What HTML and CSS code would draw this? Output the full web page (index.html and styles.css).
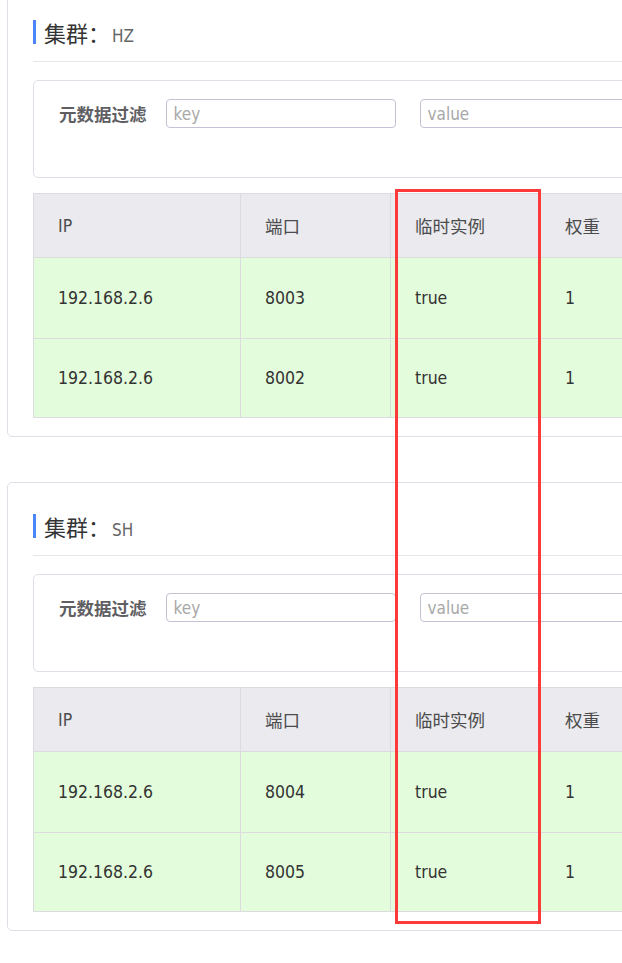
FILE: index.html
```html
<!DOCTYPE html>
<html lang="zh-CN">
<head>
  <meta charset="UTF-8">
  <meta name="viewport" content="width=device-width, initial-scale=1.0">
  <title>集群实例</title>
  <link rel="stylesheet" href="styles.css">
</head>
<body>
  <div class="page">

    <!-- Cluster HZ -->
    <div class="cluster-card">
      <div class="cluster-header">
        <span class="cluster-title">集群：<span class="cluster-name">HZ</span></span>
      </div>
      <div class="filter-box">
        <label class="filter-label">元数据过滤</label>
        <input type="text" class="filter-input" placeholder="key">
        <input type="text" class="filter-input filter-input--value" placeholder="value">
      </div>
      <table class="instance-table">
        <thead>
          <tr>
            <th class="col-ip">IP</th>
            <th class="col-port">端口</th>
            <th class="col-eph">临时实例</th>
            <th class="col-weight">权重</th>
          </tr>
        </thead>
        <tbody>
          <tr>
            <td>192.168.2.6</td>
            <td>8003</td>
            <td>true</td>
            <td>1</td>
          </tr>
          <tr>
            <td>192.168.2.6</td>
            <td>8002</td>
            <td>true</td>
            <td>1</td>
          </tr>
        </tbody>
      </table>
    </div>

    <!-- Cluster SH -->
    <div class="cluster-card">
      <div class="cluster-header">
        <span class="cluster-title">集群：<span class="cluster-name">SH</span></span>
      </div>
      <div class="filter-box">
        <label class="filter-label">元数据过滤</label>
        <input type="text" class="filter-input" placeholder="key">
        <input type="text" class="filter-input filter-input--value" placeholder="value">
      </div>
      <table class="instance-table">
        <thead>
          <tr>
            <th class="col-ip">IP</th>
            <th class="col-port">端口</th>
            <th class="col-eph">临时实例</th>
            <th class="col-weight">权重</th>
          </tr>
        </thead>
        <tbody>
          <tr>
            <td>192.168.2.6</td>
            <td>8004</td>
            <td>true</td>
            <td>1</td>
          </tr>
          <tr>
            <td>192.168.2.6</td>
            <td>8005</td>
            <td>true</td>
            <td>1</td>
          </tr>
        </tbody>
      </table>
    </div>

    <!-- Highlight around the ephemeral column -->
    <div class="highlight-box"></div>
  </div>
</body>
</html>
```

FILE: styles.css
```css
/* General Styles */
html,
body {
  overflow: hidden;
}

body {
  margin: 0;
  background-color: #ffffff;
  font-family: "DejaVu Sans", "Noto Sans CJK SC", sans-serif;
  font-stretch: condensed;
  font-size: 17.5px;
  color: #333333;
}

.page {
  position: relative;
  margin-top: -12px;
  padding-left: 7px;
}

/* Cluster card */
.cluster-card {
  width: 960px;
  border: 1px solid #dcdfe6;
  border-radius: 5px;
  padding: 31px 25px 18px;
  margin-bottom: 45px;
}

.cluster-header {
  padding-bottom: 17px;
  border-bottom: 1px solid #e6e6e6;
}

.cluster-title {
  display: block;
  height: 24px;
  line-height: 24px;
  border-left: 3px solid #4b86f8;
  padding-left: 8px;
  font-family: "Noto Sans CJK SC", sans-serif;
  font-size: 22px;
  color: #333333;
}

.cluster-name {
  font-family: "DejaVu Sans", "Noto Sans CJK SC", sans-serif;
  font-size: 17px;
  color: #666666;
  margin-left: 2px;
}

/* Metadata filter */
.filter-box {
  display: flex;
  align-items: center;
  margin-top: 18px;
  border: 1px solid #dcdfe6;
  border-radius: 5px;
  padding: 18px 25px 49px;
}

.filter-label {
  font-family: "Noto Sans CJK SC", sans-serif;
  font-weight: bold;
  font-size: 17.5px;
  color: #5f5f63;
  margin-right: 19px;
}

.filter-input {
  width: 230px;
  height: 29px;
  box-sizing: border-box;
  border: 1px solid #c4c1d4;
  border-radius: 4px;
  padding: 0 7px;
  font-family: "DejaVu Sans", sans-serif;
  font-stretch: condensed;
  font-size: 17px;
  color: #333333;
  outline: none;
}

.filter-input::placeholder {
  color: #a8a8a8;
}

.filter-input--value {
  margin-left: 24px;
  width: 300px;
}

/* Instance table */
.instance-table {
  margin-top: 15px;
  border-collapse: collapse;
  table-layout: fixed;
  width: 857px;
}

.instance-table th,
.instance-table td {
  border: 1px solid #dcdce0;
  padding: 0 24px;
  text-align: left;
  vertical-align: middle;
}

.instance-table th {
  height: 63px;
  background-color: #eaeaef;
  font-weight: normal;
  color: #4c4c4c;
}

.instance-table td {
  height: 78px;
  background-color: #e3fcdb;
  color: #333333;
}

.instance-table tbody tr:first-child td {
  height: 80px;
}

.col-ip {
  width: 158px;
}

.col-port,
.col-eph {
  width: 101px;
}

/* Red highlight overlay */
.highlight-box {
  position: absolute;
  top: 201px;
  left: 395px;
  width: 140px;
  height: 729px;
  border: 3px solid #fd3a3a;
  pointer-events: none;
}
```
